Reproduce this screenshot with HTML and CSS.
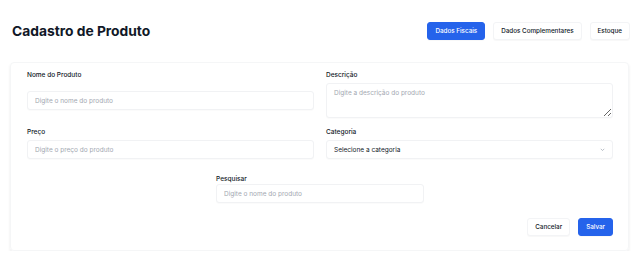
FILE: index.html
```html
<!DOCTYPE html>
<html lang="pt-BR">
<head>
  <meta charset="UTF-8">
  <meta name="viewport" content="width=device-width, initial-scale=1.0">
  <link rel="stylesheet" href="styles.css">
  <title>Cadastro de Produto</title>
</head>
<body>
  <header class="page-header">
    <h1 class="page-title">Cadastro de Produto</h1>
    <nav class="tabs">
      <button class="btn btn-primary">Dados Fiscais</button>
      <button class="btn">Dados Complementares</button>
      <button class="btn">Estoque</button>
    </nav>
  </header>

  <form class="card">
    <div class="grid">
      <div class="field field-center">
        <label>Nome do Produto</label>
        <input type="text" placeholder="Digite o nome do produto">
      </div>
      <div class="field">
        <label>Descrição</label>
        <textarea placeholder="Digite a descrição do produto"></textarea>
      </div>
      <div class="field">
        <label>Preço</label>
        <input type="text" placeholder="Digite o preço do produto">
      </div>
      <div class="field">
        <label>Categoria</label>
        <div class="select">
          <span>Selecione a categoria</span>
          <svg width="7" height="7" viewBox="0 0 10 10"><path d="M2.5 4 L5 6.5 L7.5 4" fill="none" stroke="#9ca3af" stroke-width="1"/></svg>
        </div>
      </div>
    </div>

    <div class="field search">
      <label>Pesquisar</label>
      <input type="text" placeholder="Digite o nome do produto">
    </div>

    <div class="actions">
      <button type="button" class="btn">Cancelar</button>
      <button type="button" class="btn btn-primary">Salvar</button>
    </div>
  </form>
</body>
</html>
```

FILE: styles.css
```css
body {
  margin: 0;
  font-family: 'Inter', 'Liberation Sans', sans-serif;
  background: #ffffff;
  color: #111827;
}

.page-header {
  display: flex;
  justify-content: space-between;
  align-items: center;
  height: 62px;
  padding: 0 10px 0 12px;
}

.page-title {
  margin: 0;
  font-size: 13.8px;
  font-weight: 700;
  color: #111827;
}

.tabs {
  display: flex;
  gap: 8px;
  margin-bottom: 1px;
}

.btn {
  height: 18px;
  padding: 0 7px;
  font-family: inherit;
  font-size: 6.3px;
  font-weight: 500;
  color: #111827;
  background: #ffffff;
  border: 1px solid #f3f4f6;
  border-radius: 3px;
  box-shadow: 0 1px 1px rgba(0, 0, 0, 0.03);
  cursor: pointer;
}

.btn-primary {
  background: #2563eb;
  border-color: #2563eb;
  color: #ffffff;
}

.card {
  margin: 0 11px 0 10px;
  padding: 7px 15px 14px 16px;
  border: 1px solid #f5f6f7;
  border-radius: 4px;
  box-shadow: 0 2px 3px rgba(0, 0, 0, 0.08);
}

.grid {
  display: grid;
  grid-template-columns: 1fr 1fr;
  column-gap: 12px;
  row-gap: 9px;
}

.field {
  display: flex;
  flex-direction: column;
}

.field label {
  font-size: 6.5px;
  line-height: 10px;
  font-weight: 500;
  color: #111827;
  margin-bottom: 3px;
}

.field-center input {
  margin: auto 0;
}

input,
textarea,
.select {
  box-sizing: border-box;
  width: 100%;
  height: 19px;
  padding: 0 7px;
  font-family: inherit;
  font-size: 6.5px;
  color: #111827;
  background: #ffffff;
  border: 1px solid #f1f2f4;
  border-radius: 3px;
  box-shadow: 0 1px 1px rgba(0, 0, 0, 0.02);
  outline: none;
}

input::placeholder,
textarea::placeholder {
  color: #a3a8b1;
}

textarea {
  height: 35px;
  padding: 5px 7px;
  resize: vertical;
}

.select {
  display: flex;
  align-items: center;
  justify-content: space-between;
  padding-right: 6px;
}

.search {
  width: 208px;
  margin: 15px auto 0;
}

.search label {
  margin-bottom: 0;
}

.actions {
  display: flex;
  justify-content: flex-end;
  gap: 8px;
  margin-top: 15px;
}
```
